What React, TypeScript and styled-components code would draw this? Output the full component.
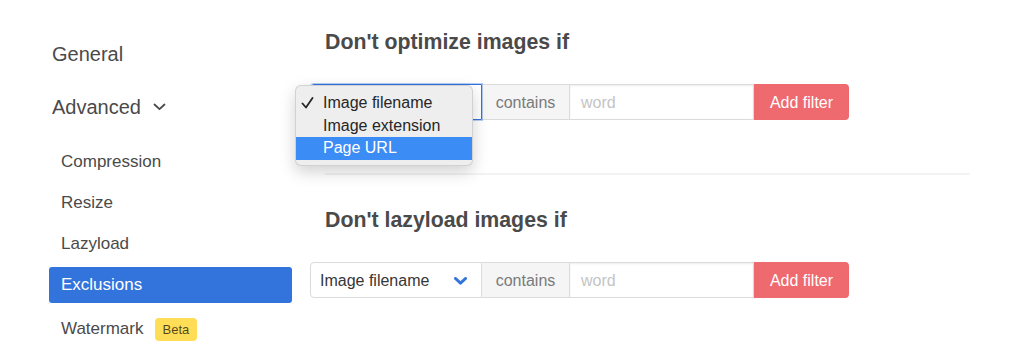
import React from 'react';
import styled, { createGlobalStyle } from 'styled-components';

const GlobalStyle = createGlobalStyle`
  html, body {
    margin: 0;
    padding: 0;
    background: #fff;
  }
  body {
    font-family: "Liberation Sans", Helvetica, Arial, sans-serif;
    color: #4a4a4a;
  }
`;

const Page = styled.div`
  display: flex;
  width: 1024px;
  height: 361px;
  overflow: hidden;
`;

const Sidebar = styled.nav`
  width: 243px;
  margin-left: 49px;
  padding-top: 39px;
  display: flex;
  flex-direction: column;
`;

const TopItem = styled.div`
  display: flex;
  align-items: center;
  gap: 12px;
  height: 30px;
  padding-left: 3px;
  font-size: 20px;
  color: #4a4a4a;
  margin-bottom: 23px;
`;

const SubList = styled.div`
  display: flex;
  flex-direction: column;
  gap: 5px;
  margin-top: -1px;
`;

const SubItem = styled.div<{ $active?: boolean; $shift?: number }>`
  display: flex;
  align-items: center;
  gap: 11px;
  height: 36px;
  padding-left: 12px;
  margin-top: ${p => p.$shift || 0}px;
  border-radius: 3px;
  font-size: 17px;
  background: ${p => (p.$active ? '#3273dc' : 'transparent')};
  color: ${p => (p.$active ? '#fff' : '#4a4a4a')};
`;

const Badge = styled.span`
  display: inline-flex;
  align-items: center;
  height: 23px;
  padding: 0 8px;
  border-radius: 4px;
  background: #ffdd57;
  color: rgba(0, 0, 0, 0.7);
  font-size: 13px;
`;

const Main = styled.main`
  margin-left: 18px;
  padding-top: 27px;
  width: 660px;
`;

const Heading = styled.h2<{ $top?: number }>`
  margin: ${p => p.$top || 0}px 0 27px 15px;
  height: 30px;
  line-height: 30px;
  font-size: 21.3px;
  font-weight: bold;
  color: #4a4a4a;
`;

const Row = styled.div`
  display: flex;
  height: 36px;
`;

const SelectWrap = styled.div`
  position: relative;
  width: 172px;
`;

const SelectBox = styled.div<{ $focused?: boolean }>`
  box-sizing: border-box;
  height: 36px;
  display: flex;
  align-items: center;
  justify-content: space-between;
  padding: 1px 14px 0 9px;
  border: 1px solid ${p => (p.$focused ? '#3273dc' : '#dbdbdb')};
  border-radius: 4px 0 0 4px;
  box-shadow: ${p => (p.$focused ? '0 0 0 1px rgba(50,115,220,0.35)' : 'none')};
  font-size: 16px;
  color: #363636;
`;

const Addon = styled.div`
  box-sizing: border-box;
  width: 88px;
  display: flex;
  align-items: center;
  justify-content: center;
  padding-top: 1px;
  background: #f5f5f5;
  border: 1px solid #dbdbdb;
  border-left: none;
  font-size: 16px;
  color: #7a7a7a;
`;

const WordInput = styled.div`
  box-sizing: border-box;
  width: 184px;
  display: flex;
  align-items: center;
  padding: 1px 0 0 11px;
  border: 1px solid #dbdbdb;
  border-left: none;
  box-shadow: inset 0 1px 2px rgba(10, 10, 10, 0.08);
  font-size: 16px;
  color: #c4c4c4;
`;

const Button = styled.div`
  width: 95px;
  display: flex;
  align-items: center;
  justify-content: center;
  padding-top: 1px;
  background: #ef6a6f;
  border-radius: 0 4px 4px 0;
  color: #fff;
  font-size: 16px;
`;

const Divider = styled.div`
  margin: 53px 0 0 15px;
  height: 2px;
  width: 645px;
  background: #f3f3f3;
`;

const Menu = styled.div`
  position: absolute;
  left: -15px;
  top: 1px;
  width: 178px;
  box-sizing: border-box;
  padding: 6px 0 5px;
  background: #eeeeee;
  border: 1px solid rgba(0, 0, 0, 0.12);
  border-radius: 6px;
  box-shadow: 0 6px 16px rgba(0, 0, 0, 0.18);
  z-index: 2;
`;

const MenuItem = styled.div<{ $hover?: boolean }>`
  position: relative;
  height: 22.5px;
  line-height: 22.5px;
  padding-left: 27px;
  font-size: 16px;
  background: ${p => (p.$hover ? '#3b8cf5' : 'transparent')};
  color: ${p => (p.$hover ? '#fff' : '#262626')};
`;

const Check = styled.svg`
  position: absolute;
  left: 5px;
  top: 5px;
`;

const Chevron = ({ color, width }: { color: string; width: number }) => (
  <svg width="13" height="8" viewBox="0 0 13 8">
    <path d="M1.5 1.5 L6.5 6.2 L11.5 1.5" fill="none" stroke={color} strokeWidth={width} strokeLinecap="round" strokeLinejoin="round" />
  </svg>
);

const FilterRow = ({ open }: { open?: boolean }) => (
  <Row>
    <SelectWrap>
      <SelectBox $focused={open}>
        <span>Image filename</span>
        <Chevron color="#3273dc" width={3} />
      </SelectBox>
      {open && (
        <Menu>
          <MenuItem>
            <Check width="13" height="12" viewBox="0 0 13 12">
              <path d="M1.5 6.5 L5 10.5 L11.5 1" fill="none" stroke="#262626" strokeWidth="1.8" strokeLinecap="round" strokeLinejoin="round" />
            </Check>
            Image filename
          </MenuItem>
          <MenuItem>Image extension</MenuItem>
          <MenuItem $hover>Page URL</MenuItem>
        </Menu>
      )}
    </SelectWrap>
    <Addon>contains</Addon>
    <WordInput>word</WordInput>
    <Button>Add filter</Button>
  </Row>
);

const App = () => {
  return (
    <Page>
      <GlobalStyle />
      <Sidebar>
        <TopItem>General</TopItem>
        <TopItem>
          Advanced
          <Chevron color="#4a4a4a" width={1.8} />
        </TopItem>
        <SubList>
          <SubItem>Compression</SubItem>
          <SubItem>Resize</SubItem>
          <SubItem>Lazyload</SubItem>
          <SubItem $active>Exclusions</SubItem>
          <SubItem $shift={3}>
            Watermark
            <Badge>Beta</Badge>
          </SubItem>
        </SubList>
      </Sidebar>
      <Main>
        <Heading>Don't optimize images if</Heading>
        <FilterRow open />
        <Divider />
        <Heading $top={30}>Don't lazyload images if</Heading>
        <FilterRow />
      </Main>
    </Page>
  );
};

export default App;
